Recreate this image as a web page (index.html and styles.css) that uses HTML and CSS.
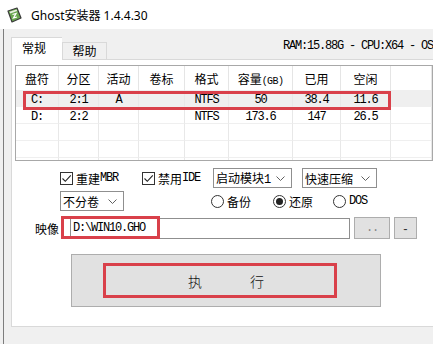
FILE: index.html
```html
<!DOCTYPE html>
<html lang="zh-CN">

<head>
    <meta charset="UTF-8">
    <meta name="viewport" content="width=device-width, initial-scale=1.0">
    <title>Ghost安装器 1.4.4.30</title>
    <link rel="stylesheet" href="styles.css">
</head>

<body>
    <div class="window">
        <div class="titlebar">
            <svg class="app-icon" width="16" height="16" viewBox="0 0 16 16">
                <polygon points="2,4 11,1 15,11 6,15" fill="#6aa84f" stroke="#3a3a3a" stroke-width="1.2" stroke-linejoin="round"/>
                <polygon points="3.5,4.8 10.5,2.4 11.2,4 4.2,6.4" fill="#e8efe0"/>
                <path d="M6.5 7.5 L10 6.5 L7.5 11 L11 10" fill="none" stroke="#ffffff" stroke-width="1.3"/>
            </svg>
            <span class="title">Ghost安装器 1.4.4.30</span>
        </div>

        <div class="client">
            <div class="tabstrip">
                <div class="tab active">常规</div>
                <div class="tab">帮助</div>
                <div class="sysinfo mono">RAM:15.88G - CPU:X64 - OS</div>
            </div>

            <div class="tab-panel">
                <!-- partition list -->
                <div class="part-list">
                    <div class="row head">
                        <div class="cell">盘符</div>
                        <div class="cell">分区</div>
                        <div class="cell">活动</div>
                        <div class="cell">卷标</div>
                        <div class="cell">格式</div>
                        <div class="cell">容量<span class="mono small">(GB)</span></div>
                        <div class="cell">已用</div>
                        <div class="cell">空闲</div>
                        <div class="cell"></div>
                    </div>
                    <div class="row data selected">
                        <div class="cell mono">C:</div>
                        <div class="cell mono">2:1</div>
                        <div class="cell mono">A</div>
                        <div class="cell mono"></div>
                        <div class="cell mono">NTFS</div>
                        <div class="cell mono">50</div>
                        <div class="cell mono">38.4</div>
                        <div class="cell mono">11.6</div>
                        <div class="cell"></div>
                    </div>
                    <div class="row data">
                        <div class="cell mono">D:</div>
                        <div class="cell mono">2:2</div>
                        <div class="cell mono"></div>
                        <div class="cell mono"></div>
                        <div class="cell mono">NTFS</div>
                        <div class="cell mono">173.6</div>
                        <div class="cell mono">147</div>
                        <div class="cell mono">26.5</div>
                        <div class="cell"></div>
                    </div>
                    <div class="row data">
                        <div class="cell"></div><div class="cell"></div><div class="cell"></div>
                        <div class="cell"></div><div class="cell"></div><div class="cell"></div>
                        <div class="cell"></div><div class="cell"></div><div class="cell"></div>
                    </div>
                    <div class="row data">
                        <div class="cell"></div><div class="cell"></div><div class="cell"></div>
                        <div class="cell"></div><div class="cell"></div><div class="cell"></div>
                        <div class="cell"></div><div class="cell"></div><div class="cell"></div>
                    </div>
                    <div class="row data">
                        <div class="cell"></div><div class="cell"></div><div class="cell"></div>
                        <div class="cell"></div><div class="cell"></div><div class="cell"></div>
                        <div class="cell"></div><div class="cell"></div><div class="cell"></div>
                    </div>
                    <div class="mark mark-row"></div>
                </div>

                <!-- options -->
                <div class="opt-row first">
                    <label class="check w-mbr">
                        <span class="box"><svg width="11" height="11" viewBox="0 0 11 11"><path d="M1.5 5.5 L4.3 8.3 L9.8 2.3" fill="none" stroke="#222" stroke-width="1.1"/></svg></span>
                        重建<span class="mono">MBR</span>
                    </label>
                    <label class="check w-ide">
                        <span class="box"><svg width="11" height="11" viewBox="0 0 11 11"><path d="M1.5 5.5 L4.3 8.3 L9.8 2.3" fill="none" stroke="#222" stroke-width="1.1"/></svg></span>
                        禁用<span class="mono">IDE</span>
                    </label>
                    <div class="select w-boot">
                        <span>启动模块<span class="mono">1</span></span>
                        <svg class="chev" width="9" height="5" viewBox="0 0 9 5"><path d="M0.5 0.5 L4.5 4.5 L8.5 0.5" fill="none" stroke="#606060"/></svg>
                    </div>
                    <div class="select w-zip">
                        <span>快速压缩</span>
                        <svg class="chev" width="9" height="5" viewBox="0 0 9 5"><path d="M0.5 0.5 L4.5 4.5 L8.5 0.5" fill="none" stroke="#606060"/></svg>
                    </div>
                </div>

                <div class="opt-row second">
                    <div class="select w-split">
                        <span>不分卷</span>
                        <svg class="chev" width="9" height="5" viewBox="0 0 9 5"><path d="M0.5 0.5 L4.5 4.5 L8.5 0.5" fill="none" stroke="#606060"/></svg>
                    </div>
                    <label class="radio w-backup"><span class="circle"></span>备份</label>
                    <label class="radio w-restore"><span class="circle on"></span>还原</label>
                    <label class="radio"><span class="circle"></span><span class="mono">DOS</span></label>
                </div>

                <div class="opt-row third">
                    <span class="field-label">映像</span>
                    <div class="path-input mono">D:\WIN10.GHO</div>
                    <button class="small-btn browse mono">..</button>
                    <button class="small-btn minus">-</button>
                    <div class="mark mark-input"></div>
                </div>

                <button class="run-btn">
                    <span>执</span><span>行</span>
                    <span class="mark mark-run"></span>
                </button>
            </div>
        </div>
    </div>
</body>

</html>
```

FILE: styles.css
```css
body {
    margin: 0;
    padding: 0;
    width: 433px;
    height: 344px;
    overflow: hidden;
    background-color: #f0f0f0;
    font-family: "Noto Sans CJK SC", "Noto Sans", sans-serif;
    font-size: 12px;
    color: #000;
}

.mono {
    font-family: "Liberation Mono", "Noto Sans CJK SC", monospace;
    font-size: 12px;
    letter-spacing: -1.2px;
}

.small {
    font-size: 10px;
    letter-spacing: -0.6px;
}

.window {
    width: 433px;
    height: 344px;
    overflow: hidden;
}

.titlebar {
    height: 29px;
    background-color: #fff;
    display: flex;
    align-items: center;
    padding-left: 6px;
    box-sizing: border-box;
}

.app-icon {
    margin-right: 9px;
}

.title {
    font-family: "Noto Sans", "Noto Sans CJK SC", sans-serif;
    font-size: 12px;
}

.client {
    margin-left: 3px;
    border-left: 1px solid #7d7d7d;
    height: 315px;
    padding: 8px 0 0 7px;
    box-sizing: border-box;
}

.tabstrip {
    display: flex;
    align-items: flex-end;
    height: 22px;
    white-space: nowrap;
}

.tab {
    height: 17px;
    border: 1px solid #d9d9d9;
    border-bottom: none;
    box-sizing: border-box;
    width: 45px;
    text-align: center;
    line-height: 16px;
    background-color: #f0f0f0;
}

.tab.active {
    height: 23px;
    width: 51px;
    margin-bottom: -1px;
    background-color: #fff;
    line-height: 20px;
    padding-right: 6px;
    border-right: none;
    position: relative;
    z-index: 1;
}

.sysinfo {
    align-self: center;
    margin-left: 176px;
    margin-top: -4px;
}

.tab-panel {
    width: 440px;
    height: 268px;
    background-color: #fff;
    border: 1px solid #d9d9d9;
    box-sizing: border-box;
    padding-top: 5px;
}

/* partition list */
.part-list {
    position: relative;
    margin-left: 3px;
    width: 418px;
    height: 96px;
    border: 1px solid #a8a8a8;
    box-sizing: border-box;
    overflow: hidden;
}

.row {
    display: grid;
    grid-template-columns: 43px 40px 40px 46px 44px 64px 48px 50px 1fr;
    height: 17px;
}

.row.head {
    height: 24px;
}

.cell {
    border-right: 1px solid #e8e8e8;
    border-bottom: 1px solid #efefef;
    text-align: center;
    line-height: 12px;
    padding-top: 4px;
    white-space: nowrap;
}

.head .cell {
    border-bottom: none;
    border-right-color: #e5e5e5;
    line-height: 25px;
    padding-top: 0;
}

.row.selected {
    background-color: #efefef;
}

.mark {
    position: absolute;
    border: 3px solid #d9404a;
    box-sizing: border-box;
}

.mark-row {
    left: 7px;
    top: 25px;
    width: 368px;
    height: 19px;
}

/* options */
.opt-row {
    display: flex;
    align-items: center;
    position: relative;
}

.opt-row.first {
    margin-top: 7px;
    padding-left: 48px;
    height: 20px;
}

.opt-row.second {
    margin-top: 3px;
    padding-left: 48px;
    height: 20px;
}

.opt-row.third {
    margin-top: 6px;
    padding-left: 23px;
    height: 22px;
}

.check,
.radio {
    display: flex;
    align-items: center;
    white-space: nowrap;
}

.box {
    width: 13px;
    height: 13px;
    border: 1px solid #333;
    box-sizing: border-box;
    margin-right: 3px;
    display: flex;
    align-items: center;
    justify-content: center;
}

.w-mbr {
    width: 82px;
}

.w-ide {
    width: 71px;
}

.select {
    height: 20px;
    border: 1px solid #8f8f8f;
    box-sizing: border-box;
    display: flex;
    align-items: center;
    justify-content: space-between;
    padding: 0 6px 0 2px;
    background-color: #fff;
}

.w-boot {
    width: 79px;
    margin-right: 10px;
}

.w-zip {
    width: 75px;
}

.w-split {
    width: 64px;
    margin-right: 87px;
}

.circle {
    width: 13px;
    height: 13px;
    border: 1px solid #333;
    border-radius: 50%;
    box-sizing: border-box;
    margin-right: 3px;
    display: flex;
    align-items: center;
    justify-content: center;
}

.circle.on::after {
    content: "";
    width: 7px;
    height: 7px;
    border-radius: 50%;
    background-color: #222;
}

.w-backup {
    width: 62px;
}

.w-restore {
    width: 60px;
}

.field-label {
    width: 35px;
}

.path-input {
    width: 280px;
    height: 21px;
    border: 1px solid #8f8f8f;
    box-sizing: border-box;
    line-height: 19px;
    padding-left: 2px;
    background-color: #fff;
}

.small-btn {
    height: 22px;
    margin-left: 4px;
    background-color: #e1e1e1;
    border: 1px solid #adadad;
    box-sizing: border-box;
    padding: 0;
    color: #333;
}

.browse {
    width: 36px;
    color: #888;
}

.minus {
    width: 23px;
    font-family: "Liberation Sans", sans-serif;
    font-size: 13px;
}

.mark-input {
    left: 49px;
    top: -1px;
    width: 99px;
    height: 23px;
}

.run-btn {
    position: relative;
    display: flex;
    align-items: center;
    justify-content: center;
    gap: 48px;
    margin: 15px 0 0 59px;
    width: 310px;
    height: 53px;
    background-color: #e1e1e1;
    border: 1px solid #adadad;
    box-sizing: border-box;
    font-family: "Noto Sans CJK SC", sans-serif;
    font-size: 14px;
    font-weight: 300;
    color: #111;
    padding: 0;
}

.mark-run {
    left: 31px;
    top: 8px;
    width: 234px;
    height: 35px;
}
```
